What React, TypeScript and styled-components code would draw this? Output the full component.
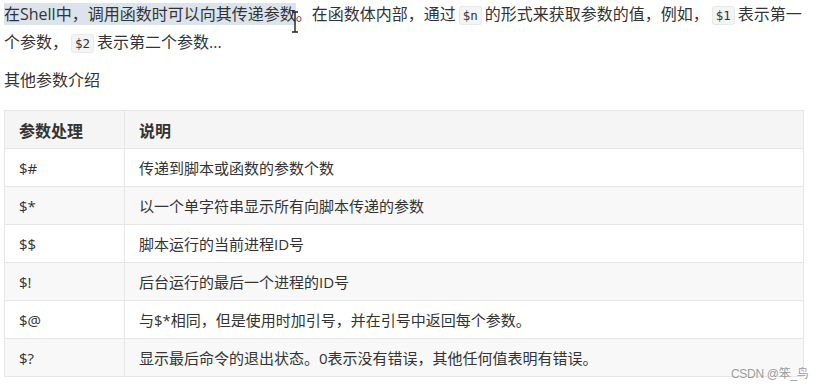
import styled, { createGlobalStyle } from "styled-components";

const GlobalStyle = createGlobalStyle`
  html, body {
    margin: 0;
    padding: 0;
    background: #ffffff;
  }
  body {
    font-family: "Open Sans", "Noto Sans CJK SC", sans-serif;
    color: #333333;
  }
`;

const Page = styled.div`
  position: relative;
  width: 823px;
  height: 388px;
  padding: 0 0 0 4px;
  overflow: hidden;
`;

const Content = styled.div`
  width: 801px;
`;

const Paragraph = styled.p<{ $gap?: number }>`
  margin: 0 0 ${(p) => p.$gap ?? 10}px 0;
  font-size: 16px;
  line-height: 28px;
  color: #333333;
`;

const Selected = styled.span`
  background: #dbe3ec;
`;

const Code = styled.code`
  font-family: "DejaVu Sans Mono", "Liberation Mono", monospace;
  font-size: 12.5px;
  line-height: 1;
  color: #333333;
  background: #f3f4f4;
  border: 1px solid #e7eaed;
  border-radius: 3px;
  padding: 1px 3px;
  margin: 0 3px;
`;

const Table = styled.table`
  width: 800px;
  table-layout: fixed;
  border-collapse: collapse;
  font-size: 15px;
  color: #333333;
`;

const HeadRow = styled.tr`
  background: #f5f5f5;
`;

const Row = styled.tr<{ $shaded: boolean }>`
  background: ${(p) => (p.$shaded ? "#f8f8f8" : "#ffffff")};
`;

const Th = styled.th<{ $w?: number }>`
  width: ${(p) => (p.$w ? `${p.$w}px` : "auto")};
  height: 37px;
  padding: 0 14px;
  text-align: left;
  font-size: 16px;
  font-weight: 700;
  border: 1px solid #e6e6e6;
`;

const Td = styled.td`
  height: 37px;
  padding: 0 14px;
  border: 1px solid #e6e6e6;
  white-space: nowrap;
`;

const Watermark = styled.div`
  position: absolute;
  left: 731px;
  top: 364px;
  white-space: nowrap;
  font-family: "Liberation Sans", "Noto Sans CJK SC", sans-serif;
  font-size: 12px;
  letter-spacing: -0.3px;
  color: #9a9a9a;
  text-shadow: 0 0 2px #ffffff;
`;

const Cursor = styled.svg`
  position: absolute;
  left: 291px;
  top: 11px;
`;

const rows: [string, string][] = [
  ["$#", "传递到脚本或函数的参数个数"],
  ["$*", "以一个单字符串显示所有向脚本传递的参数"],
  ["$$", "脚本运行的当前进程ID号"],
  ["$!", "后台运行的最后一个进程的ID号"],
  ["$@", "与$*相同，但是使用时加引号，并在引号中返回每个参数。"],
  ["$?", "显示最后命令的退出状态。0表示没有错误，其他任何值表明有错误。"],
];

export default function App() {
  return (
    <>
      <GlobalStyle />
      <Page>
        <Content>
          <Paragraph>
            <Selected>在Shell中，调用函数时可以向其传递参数</Selected>
            。在函数体内部，通过<Code>$n</Code>的形式来获取参数的值，例如，
            <Code>$1</Code>表示第一个参数，<Code>$2</Code>表示第二个参数...
          </Paragraph>
          <Paragraph $gap={16}>其他参数介绍</Paragraph>
          <Table>
            <thead>
              <HeadRow>
                <Th $w={91}>参数处理</Th>
                <Th>说明</Th>
              </HeadRow>
            </thead>
            <tbody>
              {rows.map(([k, v], i) => (
                <Row key={k} $shaded={i % 2 === 1}>
                  <Td>{k}</Td>
                  <Td>{v}</Td>
                </Row>
              ))}
            </tbody>
          </Table>
        </Content>
        <Cursor width="8" height="22" viewBox="0 0 8 22">
          <path
            d="M1 1h2.5L4 1.6 4.5 1H7M4 1.6v18.8M1 21h2.5l.5-.6.5.6H7"
            stroke="#222"
            strokeWidth="1.4"
            fill="none"
          />
        </Cursor>
        <Watermark>CSDN @笨_鸟</Watermark>
      </Page>
    </>
  );
}
